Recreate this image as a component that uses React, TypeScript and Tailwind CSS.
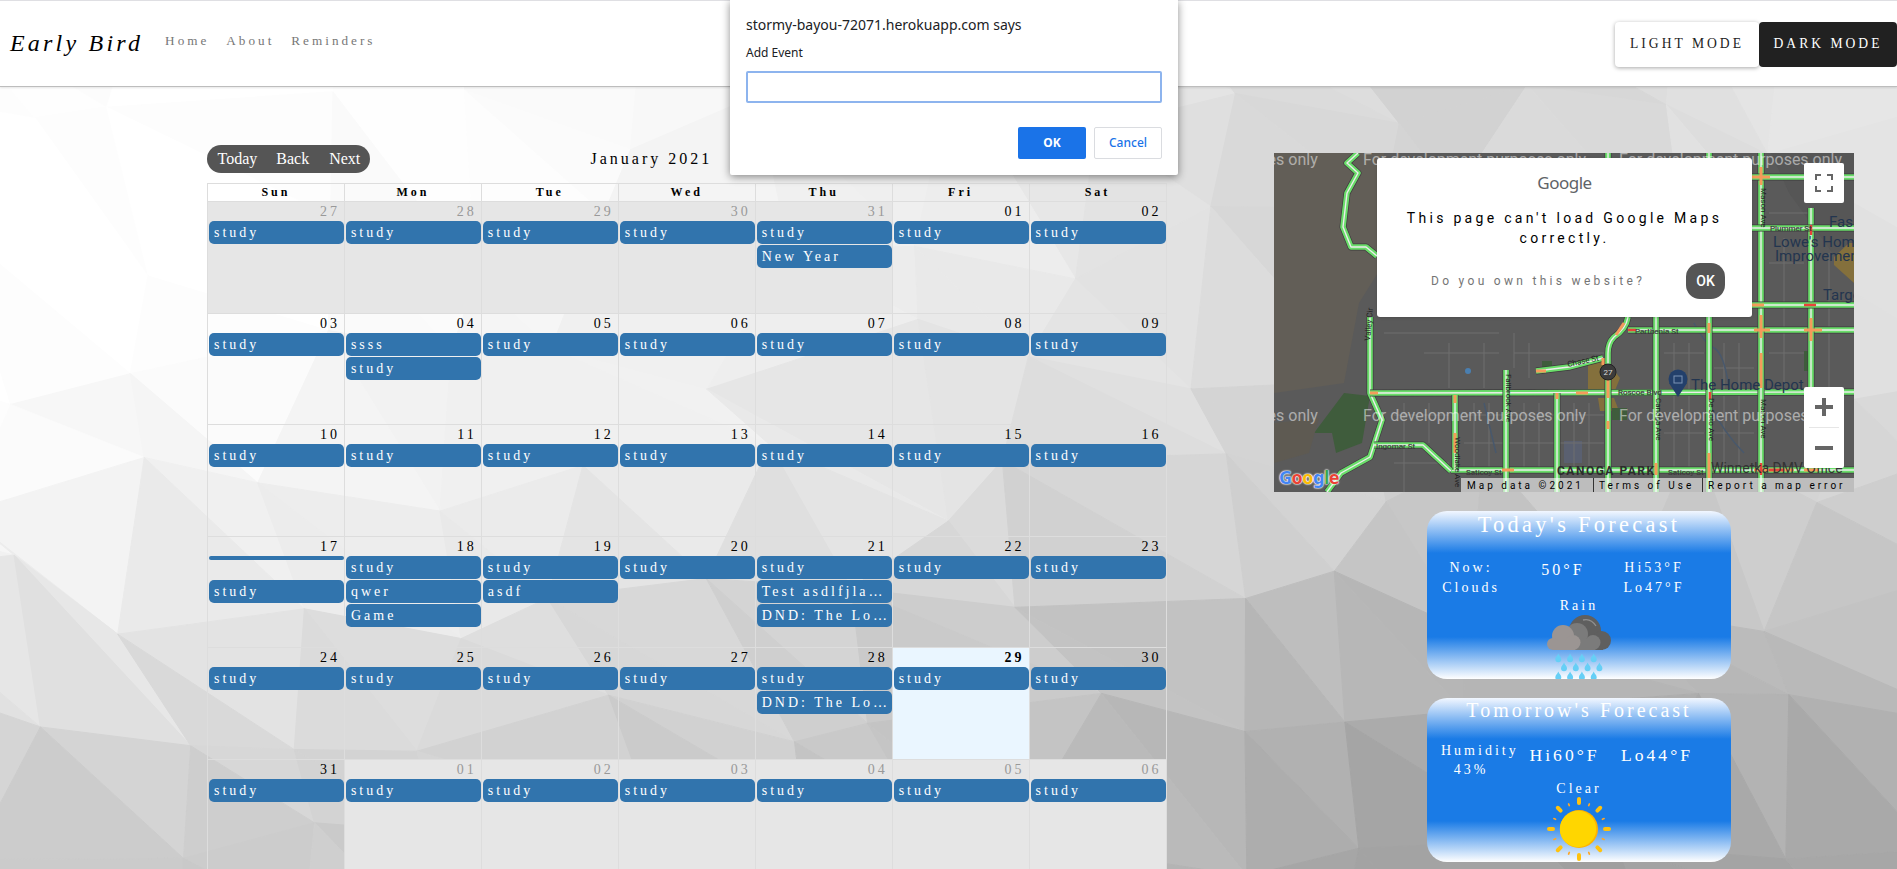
import React, { useMemo } from 'react';

const SERIF = "[font-family:'Liberation_Serif','Times_New_Roman',serif]";

type Cell = { d: string; off?: boolean; today?: boolean; events: string[] };

const study = ['study'];
const weeks: Cell[][] = [
  [
    { d: '27', off: true, events: study },
    { d: '28', off: true, events: study },
    { d: '29', off: true, events: study },
    { d: '30', off: true, events: study },
    { d: '31', off: true, events: ['study', 'New Year'] },
    { d: '01', events: study },
    { d: '02', events: study },
  ],
  [
    { d: '03', events: study },
    { d: '04', events: ['ssss', 'study'] },
    { d: '05', events: study },
    { d: '06', events: study },
    { d: '07', events: study },
    { d: '08', events: study },
    { d: '09', events: study },
  ],
  [
    { d: '10', events: study },
    { d: '11', events: study },
    { d: '12', events: study },
    { d: '13', events: study },
    { d: '14', events: study },
    { d: '15', events: study },
    { d: '16', events: study },
  ],
  [
    { d: '17', events: ['', 'study'] },
    { d: '18', events: ['study', 'qwer', 'Game'] },
    { d: '19', events: ['study', 'asdf'] },
    { d: '20', events: study },
    { d: '21', events: ['study', 'Test asdlfjla…', 'DND: The Lo…'] },
    { d: '22', events: study },
    { d: '23', events: study },
  ],
  [
    { d: '24', events: study },
    { d: '25', events: study },
    { d: '26', events: study },
    { d: '27', events: study },
    { d: '28', events: ['study', 'DND: The Lo…'] },
    { d: '29', today: true, events: study },
    { d: '30', events: study },
  ],
  [
    { d: '31', events: study },
    { d: '01', off: true, events: study },
    { d: '02', off: true, events: study },
    { d: '03', off: true, events: study },
    { d: '04', off: true, events: study },
    { d: '05', off: true, events: study },
    { d: '06', off: true, events: study },
  ],
];

const days = ['Sun', 'Mon', 'Tue', 'Wed', 'Thu', 'Fri', 'Sat'];

// shade samples for the backdrop, x every 474px, y at shadeY
const shadeY = [87, 300, 500, 700, 869];
const shades = [
  [255, 255, 240, 210, 235],
  [255, 248, 235, 210, 225],
  [248, 240, 225, 205, 210],
  [222, 220, 200, 175, 185],
  [200, 205, 190, 160, 165],
];

const shadeAt = (x: number, y: number) => {
  const cx = Math.min(3.999, Math.max(0, x / 474.25));
  const ix = Math.floor(cx);
  let iy = 0;
  while (iy < 3 && y > shadeY[iy + 1]) iy++;
  const ty = Math.min(1, Math.max(0, (y - shadeY[iy]) / (shadeY[iy + 1] - shadeY[iy])));
  const tx = cx - ix;
  const top = shades[iy][ix] * (1 - tx) + shades[iy][ix + 1] * tx;
  const bottom = shades[iy + 1][ix] * (1 - tx) + shades[iy + 1][ix + 1] * tx;
  return top * (1 - ty) + bottom * ty;
};

// low-poly backdrop: jittered triangle mesh
const PolyBackground = () => {
  const tris = useMemo(() => {
    const hash = (a: number, b: number) => {
      const s = Math.sin(a * 127.1 + b * 311.7) * 43758.5453;
      return s - Math.floor(s);
    };
    const stepX = 150;
    const stepY = 120;
    const pt = (i: number, j: number): [number, number] => [
      i * stepX + (hash(i, j) - 0.5) * 110,
      j * stepY + (hash(j + 9, i + 3) - 0.5) * 90,
    ];
    const out: { points: string; fill: string }[] = [];
    for (let i = -1; i < 14; i++) {
      for (let j = -1; j < 9; j++) {
        const a = pt(i, j);
        const b = pt(i + 1, j);
        const c = pt(i + 1, j + 1);
        const e = pt(i, j + 1);
        [[a, b, c], [a, c, e]].forEach((t, k) => {
          const x = (t[0][0] + t[1][0] + t[2][0]) / 3;
          const y = (t[0][1] + t[1][1] + t[2][1]) / 3;
          const shade = Math.round(Math.min(255, shadeAt(x, y) + (hash(i * 3 + k, j * 7) - 0.5) * 7));
          out.push({
            points: t.map((p) => p.join(',')).join(' '),
            fill: `rgb(${shade},${shade},${shade})`,
          });
        });
      }
    }
    return out;
  }, []);
  return (
    <svg className="absolute inset-0 w-full h-full" viewBox="0 0 1897 869" preserveAspectRatio="none">
      {tris.map((t, i) => (
        <polygon key={i} points={t.points} fill={t.fill} stroke={t.fill} strokeWidth={1} />
      ))}
    </svg>
  );
};

const DayCell = ({ cell }: { cell: Cell }) => (
  <div
    className={`border-l border-t border-[#ddd] min-w-0 ${cell.off ? 'bg-[#e6e6e6]' : ''} ${cell.today ? 'bg-[#eaf6ff]' : ''}`}
  >
    <div
      className={`h-[19px] pr-[4px] text-right text-[14px] leading-[19px] tracking-[3px] ${cell.off ? 'text-[#999]' : 'text-black'} ${cell.today ? 'font-bold' : ''}`}
    >
      {cell.d}
    </div>
    {cell.events.map((ev, i) => (
      <div key={i} className="h-[24px] pl-[1px]">
        {ev === '' ? (
          <div className="h-[4px] rounded-[3px] bg-[#3174ad]" />
        ) : (
          <div className="h-[23px] rounded-[5px] bg-[#3174ad] px-[5px] py-[2px] text-[14px] leading-[19px] tracking-[3px] text-white whitespace-nowrap overflow-hidden">
            {ev}
          </div>
        )}
      </div>
    ))}
  </div>
);

const Calendar = () => (
  <div className="w-[959.5px] shrink-0">
    <div className="flex items-center h-[28px]">
      <div className="flex w-[163px] h-[28px] items-center rounded-[14px] bg-[#555] pl-[10.5px] text-[16px] text-white">
        <span>Today</span>
        <span className="ml-[19px]">Back</span>
        <span className="ml-[20px]">Next</span>
      </div>
      <div className="ml-[220.5px] text-[16px] tracking-[3px] text-black">January 2021</div>
    </div>
    <div className="mt-[10px] border-r border-[#ddd]">
      <div className="grid grid-cols-7 h-[18px] border-t border-[#ddd]">
        {days.map((d) => (
          <div key={d} className="border-l border-[#ddd] text-center text-[12px] font-bold leading-[17px] tracking-[3px] text-black">
            {d}
          </div>
        ))}
      </div>
      <div className="grid grid-cols-7 auto-rows-[111.5px]">
        {weeks.map((week) => week.map((cell, i) => <DayCell key={`${cell.d}-${i}`} cell={cell} />))}
      </div>
    </div>
  </div>
);

const roads = [
  'M84,0 L73,10 L84,20 L73,40 L69,74 L77,94 L92,94 L103,103',
  'M96,164 L96,240 L108,267 L96,304 L67,320 L53,339',
  'M96,240 L580,239',
  'M177,317 L580,317',
  'M354,164 Q352,176 340,184 Q334,190 334,200 L334,339',
  'M354,177 L580,177',
  'M382,164 L382,339',
  'M435,0 L435,339',
  'M487,0 L487,339',
  'M537,55 L537,240',
  'M283,240 L283,339',
  'M232,217 L232,339',
  'M181,242 L181,317',
  'M100,292 L149,292 L177,318',
  'M262,218 L295,214 L329,205',
  'M478,24 L580,24',
  'M478,75 L580,75',
  'M478,152 L580,152',
  'M334,0 L334,6',
];

const orangeMarks = [
  'M96,240 L104,240', 'M181,242 L181,250', 'M283,240 L283,246', 'M302,240 L314,240', 'M334,222 L334,245',
  'M334,268 L334,276', 'M181,280 L181,300', 'M262,218 L272,218', 'M329,205 L329,212', 'M342,182 L350,170',
  'M487,162 L487,185', 'M480,177 L496,177', 'M537,165 L537,188', 'M530,177 L548,177', 'M435,170 L435,180',
  'M487,200 L487,235', 'M435,300 L435,325', 'M480,317 L520,317', 'M530,317 L545,317', 'M228,317 L240,317',
  'M382,310 L382,322', 'M478,24 L496,24', 'M487,14 L487,32', 'M478,152 L490,152',
];

const redMarks = ['M354,177 L362,177', 'M530,152 L542,152', 'M537,72 L537,82', 'M436,239 L436,246', 'M487,310 L487,322', 'M495,317 L510,317'];

const labels: [string, number, number][] = [
  ['Parthenia St', 361, 181],
  ['Roscoe Blvd', 344, 242],
  ['Saticoy St', 192, 322],
  ['Saticoy St', 394, 322],
  ['Ingomar St', 102, 296],
  ['Plummer St', 496, 78],
];

const GoogleMap = () => (
  <div className="relative w-[580px] h-[339px] overflow-hidden bg-[#5a5a5a] [font-family:Roboto,sans-serif]">
    <svg className="absolute inset-0 w-full h-full" viewBox="0 0 580 339">
      <polygon points="0,0 110,0 110,110 85,150 70,230 0,240" fill="#625e57" />
      <polygon points="70,240 96,243 88,290 62,300 58,280 40,280" fill="#3f5c3c" />
      <polygon points="0,270 45,265 35,300 0,310" fill="#5e5a52" />
      <polygon points="314,210 330,205 346,225 340,240 314,238" fill="#84703c" />
      <polygon points="324,245 340,245 345,258 326,258" fill="#84703c" />
      <rect x="530" y="198" width="8" height="20" fill="#3f5c3c" />
      <rect x="268" y="208" width="10" height="10" fill="#3f5c3c" />
      <rect x="338" y="255" width="15" height="12" fill="#3f5c3c" />
      <rect x="290" y="288" width="18" height="22" fill="#5a6070" />
      <polygon points="497,0 580,0 580,130 515,40" fill="#565656" />
      <polygon points="575,90 580,90 580,130 560,112 560,104" fill="#84703c" />
      {/* side streets */}
      <path
        d="M110,180 L225,180 M150,200 L225,200 M240,200 L330,200 M120,262 L175,262 M190,262 L330,262 M120,310 L175,310 M190,290 L330,290 M390,200 L430,200 M390,280 L430,280 M440,215 L480,215 M440,280 L480,280 M495,110 L530,110 M495,60 L535,60 M495,200 L530,200 M130,250 L130,339 M155,250 L155,290 M200,250 L200,315 M215,250 L215,315 M250,250 L250,315 M265,250 L265,315 M300,250 L300,315 M315,250 L315,315 M400,190 L400,315 M415,190 L415,315 M450,190 L450,315 M465,190 L465,315 M510,85 L510,235 M555,100 L555,235 M240,180 L240,215 M255,190 L255,225 M210,190 L210,235 M175,190 L175,235"
        stroke="#6e6e6e"
        strokeWidth={1}
        fill="none"
      />
      <path d="M420,170 Q430,190 440,195 T455,235 M210,250 L222,300 M435,250 Q450,280 470,300" stroke="#48586c" strokeWidth={1.5} fill="none" />
      <circle cx="194" cy="218" r="3" fill="#4a7fb0" />
      {roads.map((d, i) => (
        <g key={i} fill="none" strokeLinejoin="round">
          <path d={d} stroke="#3c3c3c" strokeWidth={7} />
          <path d={d} stroke="#6add6a" strokeWidth={5.6} />
          <path d={d} stroke="#ececec" strokeWidth={1.4} />
        </g>
      ))}
      {orangeMarks.map((d, i) => (
        <path key={i} d={d} stroke="#f59a5b" strokeWidth={3} fill="none" />
      ))}
      {redMarks.map((d, i) => (
        <path key={i} d={d} stroke="#e8433a" strokeWidth={2.5} fill="none" />
      ))}
      <g fontFamily="Roboto, sans-serif" fill="#222">
        {labels.map(([t, x, y]) => (
          <text key={`${t}-${x}`} x={x} y={y} fontSize={8} stroke="#5a5a5a" strokeWidth={0.2}>
            {t}
          </text>
        ))}
        <text fontSize={8} transform="translate(232,221) rotate(90)">Fallbrook Ave</text>
        <text fontSize={8} transform="translate(382,245) rotate(90)">Canoga Ave</text>
        <text fontSize={8} transform="translate(435,245) rotate(90)">De Soto Ave</text>
        <text fontSize={8} transform="translate(487,246) rotate(90)">Mason Ave</text>
        <text fontSize={8} transform="translate(487,35) rotate(90)">Mason Ave</text>
        <text fontSize={8} transform="translate(181,284) rotate(90)">Woodlake Ave</text>
        <text fontSize={8} transform="translate(96,188) rotate(-85)">Valley Cir</text>
        <text fontSize={8} transform="translate(294,214) rotate(-12)">Chase St</text>
        <text x="283" y="322" fontSize={12} fontWeight={700} letterSpacing={1.5} fill="#2c2c2c">CANOGA PARK</text>
        <text x="437" y="320" fontSize={14} fill="#333">Winnetka DMV Office</text>
        <g fill="#23354f" fontSize={15}>
          <text x="417" y="237">The Home Depot</text>
          <text x="499" y="94">Lowe's Home</text>
          <text x="501" y="108">Improvement</text>
          <text x="555" y="74">Fash</text>
          <text x="549" y="147">Target</text>
        </g>
      </g>
      <circle cx="404" cy="226" r="9.5" fill="#23406b" />
      <polygon points="395,230 413,230 404,244" fill="#23406b" />
      <rect x="400" y="223" width="8" height="7" fill="none" stroke="#7d93b5" strokeWidth={1} />
      <circle cx="334" cy="219" r="8" fill="#3c3c3c" stroke="#222" />
      <text x="334" y="222" fontSize={8} fill="#ddd" textAnchor="middle" fontFamily="Roboto, sans-serif">27</text>
      <g fontFamily="Roboto, sans-serif" fontSize={16} fill="#fff" fillOpacity={0.5}>
        <text x="-56" y="268">purposes only</text>
        <text x="89" y="268">For development purposes only</text>
        <text x="345" y="268">For development purposes only</text>
        <text x="-56" y="12">purposes only</text>
        <text x="89" y="12">For development purposes only</text>
        <text x="345" y="12">For development purposes only</text>
      </g>
    </svg>

    <div className="absolute left-[103px] top-[5px] w-[375px] h-[159px] rounded-[3px] bg-white flex flex-col items-center shadow-sm">
      <div className="mt-[14px] text-[17px] leading-[22px] text-[#5f6368] tracking-[-0.5px] [font-family:'Noto_Sans',sans-serif]">Google</div>
      <div className="mt-[14px] w-[330px] text-center text-[14px] leading-[20px] tracking-[3.3px] text-black">
        This page can't load Google Maps correctly.
      </div>
      <div className="mt-[15px] flex w-full items-center">
        <div className="ml-[54px] w-[255px] text-[12px] tracking-[3.3px] text-[#757575] whitespace-nowrap">Do you own this website?</div>
        <div className="flex w-[39px] h-[36px] items-center justify-center rounded-[14px] bg-[#555] text-[14px] font-medium text-white">OK</div>
      </div>
    </div>

    <div className="absolute right-[10px] top-[10px] flex w-[40px] h-[40px] items-center justify-center rounded-[2px] bg-white">
      <svg width="18" height="18" viewBox="0 0 18 18" fill="none" stroke="#666" strokeWidth="2">
        <path d="M1 6V1H6M12 1H17V6M17 12V17H12M6 17H1V12" />
      </svg>
    </div>
    <div className="absolute right-[10px] top-[234px] flex w-[40px] h-[81px] flex-col items-center rounded-[2px] bg-white">
      <div className="flex h-[40px] items-center justify-center">
        <svg width="18" height="18" viewBox="0 0 18 18" fill="#666">
          <path d="M7 0h4v7h7v4h-7v7H7v-7H0V7h7z" />
        </svg>
      </div>
      <div className="h-px w-[30px] bg-[#e6e6e6]" />
      <div className="flex h-[40px] items-center justify-center">
        <svg width="18" height="18" viewBox="0 0 18 18" fill="#666">
          <rect y="7" width="18" height="4" />
        </svg>
      </div>
    </div>

    <div className="absolute left-[5px] bottom-[4px] text-[18px] font-bold leading-[22px] tracking-[-0.5px] [font-family:'Noto_Sans',sans-serif] [text-shadow:0_0_2px_#fff,0_0_2px_#fff,0_0_1px_#fff]">
      <span className="text-[#4285f4]">G</span>
      <span className="text-[#ea4335]">o</span>
      <span className="text-[#fbbc05]">o</span>
      <span className="text-[#4285f4]">g</span>
      <span className="text-[#34a853]">l</span>
      <span className="text-[#ea4335]">e</span>
    </div>

    <div className="absolute right-0 bottom-0 flex h-[14px] w-[393px] items-center bg-white/60 pl-[6px] text-[10px] tracking-[3px] text-black whitespace-nowrap">
      <span className="w-[126px]">Map data ©2021</span>
      <span className="w-[109px] border-l border-[#333] pl-[5px]">Terms of Use</span>
      <span className="border-l border-[#333] pl-[5px]">Report a map error</span>
    </div>
  </div>
);

const dropPath = (x: number, y: number) =>
  `M${x} ${y - 4.5} C${x + 1} ${y - 2} ${x + 3} ${y - 1} ${x + 3} ${y + 1.2} A3 3 0 0 1 ${x - 3} ${y + 1.2} C${x - 3} ${y - 1} ${x - 1} ${y - 2} ${x} ${y - 4.5}z`;

const RainIcon = () => (
  <svg className="mx-auto block" width="64" height="64" viewBox="0 0 64 64">
    <circle cx="38" cy="16" r="16" fill="#5f5f5f" />
    <circle cx="54.5" cy="25.5" r="9.5" fill="#5f5f5f" />
    <rect x="30" y="20" width="26" height="15" fill="#5f5f5f" />
    <path d="M36 5 Q44 3 49 11" stroke="#8f8f8f" strokeWidth="1.3" fill="none" />
    <circle cx="30" cy="19" r="11" fill="#7b7b7b" />
    <circle cx="46" cy="27.5" r="7.5" fill="#7b7b7b" />
    <rect x="22" y="24" width="26" height="11" fill="#7b7b7b" />
    <circle cx="16" cy="21" r="11" fill="#9b9593" />
    <circle cx="6" cy="29" r="6" fill="#9b9593" />
    <circle cx="26" cy="27.5" r="7.5" fill="#9b9593" />
    <rect x="6" y="26" width="22" height="9" fill="#9b9593" />
    {[43, 52, 61].map((y, r) =>
      [0, 1, 2, 3].map((c) => (
        <path key={`${r}-${c}`} d={dropPath((r === 1 ? 17 : 11.3) + c * 11.8, y)} fill="#66cff6" />
      ))
    )}
  </svg>
);

const SunIcon = () => (
  <svg className="mx-auto block" width="64" height="64" viewBox="0 0 64 64">
    {[0, 45, 90, 135, 180, 225, 270, 315].map((a) => (
      <rect key={a} x="30" y="0" width="4" height="8" rx="2" fill="#ffc20e" transform={`rotate(${a} 32 32)`} />
    ))}
    {[22.5, 67.5, 112.5, 157.5, 202.5, 247.5, 292.5, 337.5].map((a) => (
      <rect key={a} x="31.2" y="4" width="1.6" height="3.5" rx="0.8" fill="#ffa726" transform={`rotate(${a} 32 32)`} />
    ))}
    <circle cx="32" cy="32" r="19" fill="#ffb300" />
    <circle cx="31" cy="32" r="18.2" fill="#ffd600" />
  </svg>
);

const cardClass =
  'w-[304px] overflow-hidden rounded-[20px] bg-[linear-gradient(#f2f7ff,#1a7be6_25%,#1a7be6_75%,#fff)] text-white text-center';

const Forecasts = () => (
  <div className="ml-[153px] mt-[19px] w-[304px]">
    <div className={`${cardClass} h-[168px]`}>
      <div className="h-[26px] pt-[1px] text-[22.4px] leading-[26px] tracking-[3.3px]">Today's Forecast</div>
      <div className="mt-[21px] grid grid-cols-[88px_96px_86px] h-[39px] items-start text-[14px] leading-[19.5px] tracking-[3px]">
        <div>Now:<br />Clouds</div>
        <div className="text-[16px] leading-[24px]">50°F</div>
        <div>Hi53°F<br />Lo47°F</div>
      </div>
      <div className="-mt-[1px] h-[19px] text-[14px] leading-[19px] tracking-[3px]">Rain</div>
      <RainIcon />
    </div>
    <div className={`${cardClass} mt-[19px] h-[164px]`}>
      <div className="h-[24px] text-[20px] leading-[24px] tracking-[3px]">Tomorrow's Forecast</div>
      <div className="mt-[19px] grid grid-cols-[88px_96px_86px] items-start text-[14px] leading-[19px] tracking-[3px]">
        <div>
          <div className="pl-[14px] whitespace-nowrap">Humidity</div>
          <div>43%</div>
        </div>
        <div className="pl-[3px] text-[17.6px] leading-[28px] whitespace-nowrap">Hi60°F</div>
        <div className="pl-[6px] text-[17.6px] leading-[28px] whitespace-nowrap">Lo44°F</div>
      </div>
      <div className="h-[18px] text-[14px] leading-[20px] tracking-[3px]">Clear</div>
      <SunIcon />
    </div>
  </div>
);

const PromptDialog = () => (
  <div className="absolute left-[730px] top-0 z-50 h-[175px] w-[448px] rounded-b-[2px] bg-white px-[16px] shadow-[0_2px_8px_rgba(0,0,0,0.45)] [font-family:'Noto_Sans',sans-serif]">
    <div className="pt-[14px] text-[14px] leading-[22px] text-[#202124]">stormy-bayou-72071.herokuapp.com says</div>
    <div className="mt-[8px] text-[12px] leading-[18px] text-[#202124]">Add Event</div>
    <div className="mt-[9px] h-[32px] rounded-[2px] border-2 border-[#8db4ee] bg-white" />
    <div className="mt-[24px] flex justify-end gap-[8px] text-[12px]">
      <div className="flex h-[32px] w-[68px] items-center justify-center rounded-[2px] bg-[#1a73e8] font-bold text-white">OK</div>
      <div className="flex h-[32px] w-[68px] items-center justify-center rounded-[2px] border border-[#dadce0] bg-white font-medium text-[#1a73e8]">Cancel</div>
    </div>
  </div>
);

const Navbar = () => (
  <div className="relative z-10 flex h-[87px] shrink-0 items-center border-t border-b border-t-[#dfdfe3] border-b-[#bdbdbd] bg-white shadow-[0_1px_2px_rgba(0,0,0,0.1)]">
    <div className="ml-[10px] mb-[2px] text-[24px] italic tracking-[3.2px] text-black">Early Bird</div>
    <nav className="ml-[22px] mb-[6px] flex gap-[17px] text-[13.2px] tracking-[3px] text-[#777]">
      <span>Home</span>
      <span>About</span>
      <span>Reminders</span>
    </nav>
    <div className="ml-auto mt-[2px] flex text-[13.6px] font-medium tracking-[3px]">
      <div className="flex h-[45px] w-[144px] items-center justify-center rounded-[4px] bg-white text-[#222] shadow-[0_1px_4px_rgba(0,0,0,0.35)]">LIGHT MODE</div>
      <div className="flex h-[45px] w-[138px] items-center justify-center rounded-[4px] bg-[#212121] text-white">DARK MODE</div>
    </div>
  </div>
);

export default function App() {
  return (
    <div className={`relative flex h-[869px] w-full flex-col overflow-hidden ${SERIF}`}>
      <PolyBackground />
      <Navbar />
      <div className="relative flex pl-[207px]">
        <div className="pt-[58px]">
          <Calendar />
        </div>
        <div className="ml-[107.5px] pt-[66px]">
          <GoogleMap />
          <Forecasts />
        </div>
      </div>
      <PromptDialog />
    </div>
  );
}
